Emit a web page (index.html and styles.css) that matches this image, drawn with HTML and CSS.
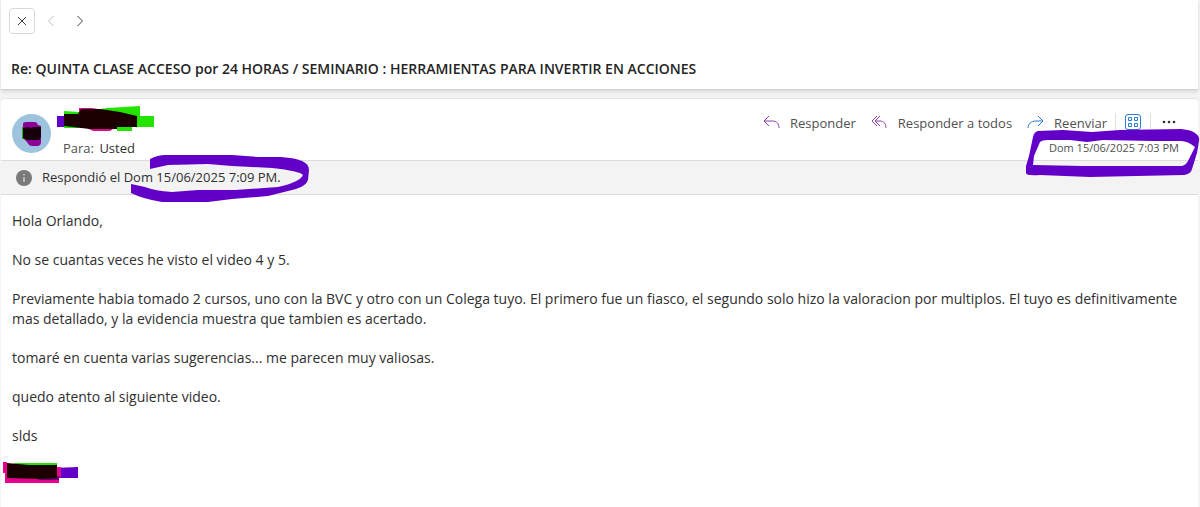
FILE: index.html
```
<!DOCTYPE html>
<html lang="es">
<head>
    <meta charset="UTF-8">
    <meta name="viewport" content="width=device-width, initial-scale=1.0">
    <title>Correo</title>
    <link rel="stylesheet" href="styles.css">
</head>
<body>

    <header class="top">
        <nav class="nav">
            <button type="button" class="btn-icon btn-close" aria-label="Cerrar">
                <svg width="10" height="10" viewBox="0 0 10 10"><path d="M1 1l8 8M9 1L1 9"/></svg>
            </button>
            <button type="button" class="btn-icon btn-prev" aria-label="Anterior" disabled>
                <svg width="8" height="12" viewBox="0 0 8 12"><path d="M6.5 1L1.5 6l5 5"/></svg>
            </button>
            <button type="button" class="btn-icon" aria-label="Siguiente">
                <svg width="8" height="12" viewBox="0 0 8 12"><path d="M1.5 1l5 5-5 5"/></svg>
            </button>
        </nav>
        <h1 class="subject">Re: QUINTA CLASE ACCESO por 24 HORAS / SEMINARIO : HERRAMIENTAS PARA INVERTIR EN ACCIONES</h1>
    </header>

    <main class="message">
        <div class="message-header">
            <div class="avatar">
                <svg width="22" height="26" viewBox="0 0 22 26">
                    <path fill="#22b80c" d="M1 6h4v12H1z"/>
                    <path fill="#8c0095" d="M2 3q0-2 3-2h9q2 0 3 3l3 1v16q0 4-4 4h-5q-3 0-5-4l-4-4z"/>
                    <path fill="#16000b" d="M2 7l5-1 3 1 2-1h8v10l-2 3H6l-4-2z"/>
                </svg>
            </div>
            <div class="sender">
                <svg class="sender-name" width="98" height="26" viewBox="0 0 98 26">
                    <path fill="#6200c8" d="M0 10h7V9h8v12H0z"/>
                    <path fill="#22e400" d="M7 5l15 1 28-4 33-2v10h14v11H75v4H60v-3H7z"/>
                    <path fill="#e00a8c" d="M22 2h13l18 3v17l3 1-3 2H36l-6-3-8-4z"/>
                    <path fill="#1c0001" d="M7 8h14l3-5 19 0 20 3 17 4v11H60v2l-27 0-26-3z"/>
                </svg>
                <p class="to"><span>Para:</span> <span class="to-name">Usted</span></p>
            </div>
            <div class="side">
                <div class="actions">
                    <button type="button" class="btn-action btn-reply">
                        <svg width="18" height="14" viewBox="0 0 18 14"><path d="M6 1L1 6l5 5M1 6h8c5 0 7 3 7 7"/></svg>
                        Responder
                    </button>
                    <button type="button" class="btn-action btn-reply">
                        <svg width="18" height="14" viewBox="0 0 18 14"><path d="M6 1L1 6l5 5M9 1L4 6l5 5M4 6h5c4 0 6 3 6 7"/></svg>
                        Responder a todos
                    </button>
                    <button type="button" class="btn-action btn-forward">
                        <svg width="18" height="14" viewBox="0 0 18 14"><path d="M11 1l5 5-5 5M16 6H9c-5 0-8 3-8 7"/></svg>
                        Reenviar
                    </button>
                    <button type="button" class="btn-apps" aria-label="Aplicaciones">
                        <svg width="16" height="16" viewBox="0 0 16 16">
                            <rect x=".5" y=".5" width="15" height="15" rx="2.5"/>
                            <path d="M3.500 3.500h3v3h-3zM9.500 3.500h3v3h-3zM3.500 9.500h3v3h-3zM9.500 9.500h3v3h-3z"/>
                        </svg>
                    </button>
                    <button type="button" class="btn-more" aria-label="Más acciones">
                        <svg width="14" height="4" viewBox="0 0 14 4"><circle cx="2" cy="2" r="1.300"/><circle cx="7" cy="2" r="1.300"/><circle cx="12" cy="2" r="1.300"/></svg>
                    </button>
                </div>
                <div class="date">
                    <time datetime="2025-06-15T19:03">Dom 15/06/2025 7:03 PM</time>
                    <svg class="mark mark-date" width="174" height="48" viewBox="0 0 174 48">
                        <path fill="#6200c8" fill-rule="evenodd" d="M0 44V37L3 27L7 8Q8 3 12 2L37 1L66 3L94 1L155 0Q166 1 169 4Q174 7 173 12L171 24L166 40Q165 45 158 46L110 47L64 48L14 46Q0 47 0 44ZM14 13L8 27L7 36L57 37L156 37Q160 36 162 32L169 18Q162 12 155 12L127 12L77 11L61 13L44 11L22 11Q16 11 14 13Z"/>
                    </svg>
                </div>
            </div>
        </div>

        <div class="info-bar">
            <svg class="info-icon" width="16" height="16" viewBox="0 0 16 16">
                <circle cx="8" cy="8" r="8"/>
                <path d="M7.500 4h1v1.500h-1zM7.500 7h1v5h-1z"/>
            </svg>
            <p class="info-text">
                Respondió el Dom 15/06/2025 7:09 PM.
                <svg class="mark mark-reply" width="178" height="48" viewBox="0 0 178 48">
                    <path fill="#6200c8" d="M19 4Q27 0 34 0L101 0L127 2L150 2Q165 3 171 6Q178 9 178 15L177 25Q175 31 165 34L137 41L101 44L77 47L31 47Q12 44 0 38L0 29L14 32Q24 36 41 37L67 35L104 35L147 32Q169 27 172 20Q169 16 141 13L101 11L77 9L37 10L19 14Z"/>
                </svg>
            </p>
        </div>

        <article class="body">
            <p>Hola Orlando,</p>
            <p>No se cuantas veces he visto el video 4 y 5.</p>
            <p>Previamente habia tomado 2 cursos, uno con la BVC y otro con un Colega tuyo. El primero fue un fiasco, el segundo solo hizo la valoracion por multiplos. El tuyo es definitivamente mas detallado, y la evidencia muestra que tambien es acertado.</p>
            <p>tomaré en cuenta varias sugerencias... me parecen muy valiosas.</p>
            <p>quedo atento al siguiente video.</p>
            <p>slds</p>
            <svg class="signature" width="75" height="22" viewBox="0 0 75 22">
                <path fill="#6200c8" d="M50 6l25-1v11H50z"/>
                <path fill="#e6008c" d="M0 0h4v5h54v10h-2v6H2V11H0z"/>
                <path fill="#22e400" d="M10 1h44v5H24z"/>
                <path fill="#6b006f" d="M30 14h26v4H36z"/>
                <path fill="#1c0001" d="M4 1l22 2h28v13l-16 1-34-1z"/>
            </svg>
        </article>
    </main>

</body>
</html>
```

FILE: styles.css
```
* {
    box-sizing: border-box;
}
body {
    font-family: "Open Sans", "Segoe UI", sans-serif;
    font-size: 14px;
    line-height: 20px;
    color: #303030;
    background: #f3f3f3;
    margin: 0;
    padding: 0 2px 0 1px;
    min-height: 100vh;
    display: flex;
    flex-direction: column;
    gap: 8px;
}
h1, p {
    margin: 0;
}
button {
    font: inherit;
    color: #505050;
    background: none;
    border: none;
    padding: 0;
    display: flex;
    align-items: center;
    justify-content: center;
    cursor: pointer;
}
svg {
    display: block;
    flex: none;
}
.top {
    background: white;
    padding: 8px 8px 10px;
    border-bottom: 1px solid #d0d0d0;
    box-shadow: 0 2px 4px rgba(0, 0, 0, 0.1);
}
.nav {
    display: flex;
    align-items: center;
    gap: 3px;
}
.btn-icon {
    width: 26px;
    height: 26px;
}
.btn-icon svg {
    fill: none;
    stroke: #404040;
}
.btn-close {
    border: 1px solid #d8d8d8;
    border-radius: 4px;
}
.btn-prev svg {
    stroke: #c0c0c0;
}
.subject {
    margin: 25px 0 0 2px;
    font-size: 14px;
    line-height: 20px;
    font-weight: 600;
    color: #242424;
}
.message {
    flex: 1;
    background: white;
    border-top: 1px solid #e4e4e4;
    border-radius: 4px 4px 0 0;
}
.message-header {
    display: flex;
    height: 61px;
    padding-left: 11px;
}
.avatar {
    width: 39px;
    height: 39px;
    margin-top: 15px;
    border-radius: 50%;
    background: #9dc3df;
    display: flex;
    align-items: center;
    justify-content: center;
}
.sender {
    margin: 7px 0 0 6px;
    flex: 1;
}
.to {
    margin: 6px 0 0 6px;
    font-size: 13px;
    color: #505050;
}
.to-name {
    margin-left: 2px;
    color: #303030;
}
.side {
    display: flex;
    flex-direction: column;
    align-items: flex-end;
    margin-top: 13px;
}
.actions {
    display: flex;
    align-items: center;
    padding-right: 22px;
}
.btn-action {
    gap: 9px;
    margin-right: 15px;
    font-size: 13px;
    line-height: 22px;
}
.btn-action svg {
    fill: none;
    stroke: #8f3fa8;
    margin-bottom: 2px;
}
.btn-forward {
    margin-right: 8px;
}
.btn-forward svg {
    stroke: #2b7cd3;
}
.btn-apps {
    width: 36px;
    height: 20px;
    border-left: 1px solid #e0e0e0;
    border-right: 1px solid #e0e0e0;
}
.btn-apps svg {
    fill: none;
    stroke: #2b7cd3;
    margin-bottom: 2px;
}
.btn-more {
    margin-left: 11px;
}
.btn-more svg {
    fill: #303030;
    margin-bottom: 2px;
}
.date {
    position: relative;
    margin-right: 19px;
    font-size: 11px;
    line-height: 28px;
    color: #505050;
}
.mark {
    position: absolute;
    z-index: 1;
}
.mark-date {
    top: -5px;
    right: -21px;
}
.info-bar {
    display: flex;
    align-items: center;
    gap: 10px;
    padding: 6px 15px;
    background: #f3f3f3;
    border-top: 1px solid #dcdcdc;
    border-bottom: 1px solid #dcdcdc;
}
.info-icon {
    fill: #7a7a7a;
}
.info-icon path {
    fill: #f3f3f3;
}
.info-text {
    position: relative;
    font-size: 13px;
    line-height: 21px;
}
.mark-reply {
    top: -12px;
    left: 89px;
}
.body {
    padding: 16px 11px;
}
.body p {
    margin-bottom: 19px;
}
.signature {
    margin: -3px 0 0 -9px;
}
```
